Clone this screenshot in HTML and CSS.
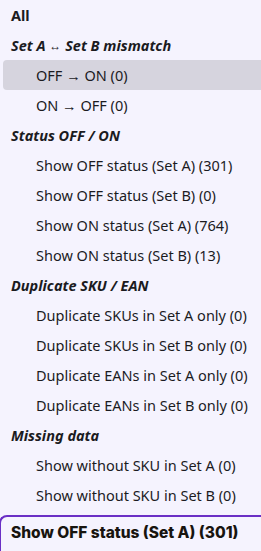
FILE: index.html
```html
<!DOCTYPE html>
<html lang="en">
<head>
    <meta charset="UTF-8">
    <meta name="viewport" content="width=device-width, initial-scale=1.0">
    <title>Filter select</title>
    <link rel="stylesheet" href="styles.css">
</head>
<body>
    <div class="dropdown">
        <div class="option top">All</div>

        <div class="group">Set A <span class="arrow">↔</span> Set B mismatch</div>
        <div class="option active">OFF → ON (0)</div>
        <div class="option">ON → OFF (0)</div>

        <div class="group">Status OFF / ON</div>
        <div class="option">Show OFF status (Set A) (301)</div>
        <div class="option">Show OFF status (Set B) (0)</div>
        <div class="option">Show ON status (Set A) (764)</div>
        <div class="option">Show ON status (Set B) (13)</div>

        <div class="group">Duplicate SKU / EAN</div>
        <div class="option">Duplicate SKUs in Set A only (0)</div>
        <div class="option">Duplicate SKUs in Set B only (0)</div>
        <div class="option">Duplicate EANs in Set A only (0)</div>
        <div class="option">Duplicate EANs in Set B only (0)</div>

        <div class="group">Missing data</div>
        <div class="option">Show without SKU in Set A (0)</div>
        <div class="option">Show without SKU in Set B (0)</div>
    </div>

    <div class="select">Show OFF status (Set A) (301)</div>
</body>
</html>
```

FILE: styles.css
```css
* {
    margin: 0;
    padding: 0;
    box-sizing: border-box;
}

body {
    font-family: 'Noto Sans', 'Open Sans', sans-serif;
    background: #f5f3fe;
    color: #1b1b1f;
    width: 261px;
    height: 551px;
    overflow: hidden;
}

.dropdown {
    height: 515px;
}

.option,
.group {
    height: 30px;
    line-height: 30px;
    font-size: 14.5px;
    white-space: nowrap;
}

.option {
    margin-left: 3px;
    padding-left: 33px;
    border-radius: 4px 0 0 4px;
}

.option.top {
    padding-left: 8px;
    font-weight: 700;
}

.option.active {
    background: #d6d4de;
}

.group {
    padding-left: 11px;
    font-size: 14.5px;
    font-weight: 700;
    font-style: italic;
}

.arrow {
    font-style: normal;
    font-weight: 400;
    font-size: 12px;
    vertical-align: 1px;
}

.select {
    border-top: 2px solid #6a2fc5;
    border-left: 2px solid #6a2fc5;
    border-radius: 8px 0 0 0;
    margin-left: -1px;
    height: 40px;
    padding: 6px 0 0 10px;
    font-family: Inter, 'Noto Sans', sans-serif;
    font-weight: 800;
    font-size: 15.5px;
    color: #18140f;
    white-space: nowrap;
}
```
